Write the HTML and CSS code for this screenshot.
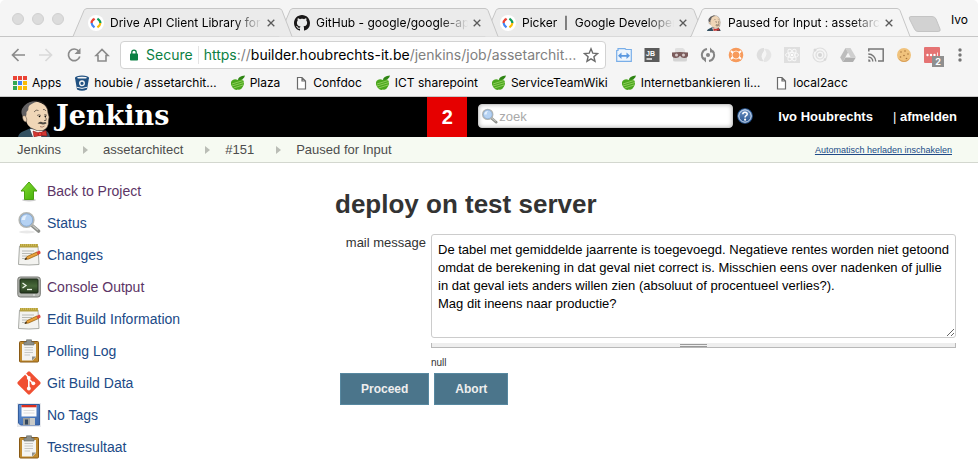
FILE: index.html
```html
<!DOCTYPE html>
<html lang="nl">
<head>
<meta charset="utf-8">
<title>Paused for Input : assetarchitect</title>
<link rel="stylesheet" href="styles.css">
</head>
<body>
<svg class="sprite" aria-hidden="true">
  <defs>
    <linearGradient id="g-green" x1="0" y1="0" x2="1" y2="1"><stop offset="0" stop-color="#8ae234"/><stop offset="1" stop-color="#3faa06"/></linearGradient>
    <linearGradient id="g-screen" x1="0" y1="0" x2="0" y2="1"><stop offset="0" stop-color="#2b4422"/><stop offset=".5" stop-color="#48683a"/><stop offset="1" stop-color="#24371d"/></linearGradient>
    <linearGradient id="g-help" x1="0" y1="0" x2="0" y2="1"><stop offset="0" stop-color="#7397c8"/><stop offset="1" stop-color="#26538f"/></linearGradient>
    <linearGradient id="g-disk" x1="0" y1="0" x2="1" y2="1"><stop offset="0" stop-color="#5d8fd3"/><stop offset="1" stop-color="#3a67ad"/></linearGradient>
  </defs>
  <symbol id="tab" viewBox="0 0 221 29" preserveAspectRatio="none">
    <path d="M0 28.5H1L12 2.500Q13 .5 15 .5H207Q209 .5 210 2.500L220 28.500"/>
  </symbol>
  <symbol id="developers" viewBox="0 0 16 16">
    <circle cx="8" cy="8" r="8" fill="#fff"/>
    <g fill="none" stroke-width="2.200">
      <path d="M6.600 3.600L4.800 5.200" stroke="#ea4335"/><path d="M5.400 4.400Q3.600 6 3.600 8" stroke="#ea4335"/>
      <path d="M3.600 8Q3.800 10.300 6.500 12.400" stroke="#4285f4"/>
      <path d="M9.400 3.600Q12.400 5.600 12.400 8" stroke="#0f9d58"/>
      <path d="M12.400 8Q12.300 10.300 9.400 12.400" stroke="#fbbc05"/>
    </g>
  </symbol>
  <symbol id="github" viewBox="0 0 16 16">
    <path fill="#191717" d="M8 0C3.580 0 0 3.580 0 8c0 3.540 2.290 6.530 5.470 7.590.4.070.55-.17.55-.38 0-.19-.01-.82-.01-1.490-2.010.37-2.530-.49-2.690-.94-.09-.23-.48-.94-.82-1.130-.28-.15-.68-.52-.01-.53.63-.01 1.080.58 1.230.82.72 1.210 1.870.87 2.330.66.070-.52.28-.87.51-1.070-1.780-.2-3.640-.89-3.640-3.950 0-.87.31-1.590.82-2.150-.08-.2-.36-1.020.08-2.120 0 0 .67-.21 2.200.82.64-.18 1.320-.27 2-.27s1.360.09 2 .27c1.530-1.040 2.200-.82 2.200-.82.44 1.100.16 1.920.08 2.120.51.56.82 1.270.82 2.150 0 3.070-1.870 3.750-3.650 3.950.29.25.54.73.54 1.480 0 1.070-.01 1.930-.01 2.200 0 .21.15.46.55.38A8.010 8.010 0 0 0 16 8c0-4.420-3.580-8-8-8z"/>
  </symbol>
  <symbol id="butler" viewBox="0 0 33 37">
    <path d="M0 37Q1 32.500 6 31L13 28 26 30Q31 31 32 37Z" fill="#335061"/>
    <path d="M12 29L25 30 23 37H15Z" fill="#fff"/>
    <path d="M5 17Q4 8 9 4 16 0 23 3 30 6 30 13 32 17 30.500 21 31 28 25 30.500 19 32 13 28 9 25 8 21 5 20 5 17Z" fill="#f0d6b7"/>
    <path d="M5 17Q2.500 13 4 9 7 3 15 1.300L20 1.500Q12 3.500 10.500 7 11 10 8.500 12 8.500 15 8 16Z" fill="#626062"/>
    <path d="M15 1.300Q24 0 28 6 30 9 30 13 32 17 30.500 21 31 28 25 30.500 19 32 13 28" fill="none" stroke="#3a3230" stroke-width=".6"/>
    <path d="M4.500 17Q5 14.500 7.500 16 9.500 19 8.500 22 5 22 4.500 17Z" fill="#f0d6b7" stroke="#4a403a" stroke-width=".5"/>
    <path d="M16 12Q18 9 20.500 10.500M25 9.500Q27 9 28 11M19 15.500Q21 14 23 15.500M26 15Q28 14 29 15.500M26.500 16Q29 19 28 20.500H26" fill="none" stroke="#4a403a" stroke-width=".7"/>
    <path d="M19.500 23.500Q22 20.500 25 22.500 28.500 21 28.500 23.500 25 25 23 24Z" fill="#504a42"/>
    <path d="M22 26.500Q24 28 26.500 26" fill="none" stroke="#8b5a4a" stroke-width=".7"/>
    <circle cx="21.500" cy="16.500" r=".8"/><circle cx="27.500" cy="16.300" r=".7"/>
    <path d="M15 31L21 33 28 30.500 29 36 22 35.500 16 37Z" fill="#d33833" stroke="#81100f" stroke-width=".5"/>
    <circle cx="22" cy="34" r="1.900" fill="#ef3d3a" stroke="#81100f" stroke-width=".5"/>
  </symbol>
  <symbol id="apple" viewBox="0 0 16 16">
    <path d="M8 5Q11 3 13 5 15 8 13 11.500 11 15.500 8 14.500 5 16 2.500 12.500 0 9 1.500 6 4 3 8 5Z" fill="#4ba71e"/>
    <path d="M8 5Q8 1 15 .5 14 5 8 5Z" fill="#2f8514"/>
    <path d="M2 9L13 5.500M2 11L14 7.500M3.500 13L13 10" stroke="#a8dc72" stroke-width=".7"/>
  </symbol>
  <symbol id="page" viewBox="0 0 16 16">
    <path d="M4.500 2.500H9L12.500 6V14H4.500ZM9 2.500V6H12.500" fill="#fff" stroke="#6a6a6a" stroke-width="1.200"/>
  </symbol>
  <symbol id="notepad" viewBox="0 0 24 24">
    <path d="M2.500 3H21L22 21.500Q12 22.500 1.500 21.500Z" fill="#f3f3f0" stroke="#a9aba6"/>
    <path d="M3 1H21V4.500H3Z" fill="#b5a03e"/><path d="M4 2H20.500" stroke="#e6d36c" stroke-dasharray="1 1"/>
    <path d="M5 8H17M5 10.500H15M5 13H10M5 15.500H8" stroke="#b8bab5"/>
    <path d="M8 16.500L10 13.500 20 9 21.500 11.500 11.500 16Z" fill="#e8a13c" stroke="#8f5902" stroke-width=".7"/>
    <path d="M19.500 9L22.500 7.500Q24 9 23.500 10.500L21 12Z" fill="#dd4c3c"/><path d="M7.500 17L9 14.500 10 16Z" fill="#222"/>
  </symbol>
  <symbol id="clipboard" viewBox="0 0 24 24">
    <rect x="2.500" y="2.500" width="19" height="20.500" rx="1" fill="#c18b2f" stroke="#8a5a14"/>
    <path d="M5 5H19V18L15.500 21.500H5Z" fill="#f4f4f2"/><path d="M19 17.500H15V21.500Z" fill="#8f918d"/>
    <path d="M7.500 8.500H16M7.500 11H16M7.500 13.500H16M7.500 16H13" stroke="#c7c8c5"/>
    <path d="M7 3H9.500V.8H14.500V3H17V6H7Z" fill="#8d908b" stroke="#62645f" stroke-width=".6"/>
  </symbol>
  <symbol id="lens" viewBox="0 0 24 24">
    <path d="M15 14.500L21.500 20" stroke="#8a8c88" stroke-width="3.600" stroke-linecap="round"/>
    <path d="M15.500 14.500L21 19" stroke="#c4c6c2" stroke-width="1.500"/>
    <circle cx="9.500" cy="9" r="7.200" fill="#b5d2f3" stroke="#b4b6b2" stroke-width="1.800"/>
    <circle cx="9.500" cy="9" r="6.200" fill="none" stroke="#7fa4d2" stroke-width=".8"/>
    <path d="M4.500 9Q5 4.500 10 4.300 8 6 8 9Z" fill="#e4f0fd"/>
  </symbol>
</svg>

<header class="browser">
  <div class="tabstrip">
    <div class="lights"><i></i><i></i><i></i></div>
    <div class="tabs">
      <div class="tab tab-1"><svg class="tab-shape"><use href="#tab"/></svg><svg class="i16"><use href="#developers"/></svg><span class="tab-title">Drive API Client Library for Java</span><button class="close" aria-label="Close tab"><svg viewBox="0 0 8 8"><path d="M.7.7L7.300 7.300M7.300.7L.7 7.300"/></svg></button></div>
      <div class="tab tab-2"><svg class="tab-shape"><use href="#tab"/></svg><svg class="i16"><use href="#github"/></svg><span class="tab-title">GitHub - google/google-api-java</span><button class="close" aria-label="Close tab"><svg viewBox="0 0 8 8"><path d="M.7.7L7.300 7.300M7.300.7L.7 7.300"/></svg></button></div>
      <div class="tab tab-3"><svg class="tab-shape"><use href="#tab"/></svg><svg class="i16"><use href="#developers"/></svg><span class="tab-title">Picker &nbsp;|&nbsp; Google Developers</span><button class="close" aria-label="Close tab"><svg viewBox="0 0 8 8"><path d="M.7.7L7.300 7.300M7.300.7L.7 7.300"/></svg></button></div>
      <div class="tab active"><svg class="tab-shape"><use href="#tab"/></svg><svg class="i16"><use href="#butler"/></svg><span class="tab-title">Paused for Input : assetarchitect</span><button class="close" aria-label="Close tab"><svg viewBox="0 0 8 8"><path d="M.7.7L7.300 7.300M7.300.7L.7 7.300"/></svg></button></div>
    </div>
    <button class="new-tab" aria-label="New tab"><svg viewBox="0 0 34 16"><path d="M3 .5H24Q27 .5 28 3L32 13Q33 15.500 30 15.500H10Q7.500 15.500 6.500 13L1.500 3Q.5 .5 3 .5Z" fill="#d2d2d2" stroke="#c4c4c4"/></svg></button>
    <span class="profile">Ivo</span>
  </div>

  <div class="toolbar">
    <div class="nav">
      <button aria-label="Back"><svg viewBox="0 0 16 16"><path d="M15 8H3M8.500 2L2.500 8L8.500 14" fill="none" stroke="#8b8b8b" stroke-width="1.700"/></svg></button>
      <button aria-label="Forward"><svg viewBox="0 0 16 16"><path d="M1 8H13M7.500 2L13.500 8L7.500 14" fill="none" stroke="#d9d9d9" stroke-width="1.700"/></svg></button>
      <button aria-label="Reload"><svg viewBox="0 0 16 16"><path d="M12.800 4.200A5.800 5.800 0 1 0 13.800 9.500" fill="none" stroke="#8b8b8b" stroke-width="1.700"/><path d="M14.500 1V7H8.500Z" fill="#8b8b8b"/></svg></button>
      <button aria-label="Home"><svg viewBox="0 0 16 16"><path d="M2 8.500L8 2.500L14 8.500H12V14H4V8.500Z" fill="none" stroke="#8b8b8b" stroke-width="1.600"/></svg></button>
    </div>
    <div class="omnibox">
      <svg class="lock" viewBox="0 0 8 12"><rect y="4.500" width="8" height="7" rx=".8" fill="#0b8043"/><path d="M1.800 5V3.300a2.200 2.200 0 0 1 4.400 0V5" fill="none" stroke="#0b8043" stroke-width="1.300"/></svg>
      <span class="secure">Secure</span>
      <span class="url"><span class="scheme">https</span>://<span class="host">builder.houbrechts-it.be</span>/jenkins/job/assetarchit…</span>
      <button class="star" aria-label="Bookmark"><svg viewBox="0 0 16 16"><path d="M8 1.800L9.800 6.200L14.500 6.600L10.900 9.700L12 14.300L8 11.800L4 14.300L5.100 9.700L1.500 6.600L6.200 6.200Z" fill="none" stroke="#6b6b6b" stroke-width="1.400"/></svg></button>
    </div>
    <div class="extensions">
      <svg viewBox="0 0 16 16"><path d="M.7 3.500V14.300H15.300V2.500H10L9 1.700H2V3.500Z" fill="#eef5fd" stroke="#79aee8" stroke-width="1.200"/><path d="M2 8.800L5.500 5.500V8H10.500V5.500L14 8.800L10.500 12V9.700H5.500V12Z" fill="#5b98e0"/></svg>
      <svg viewBox="0 0 16 16"><rect x=".5" y="1" width="15" height="14" fill="#5b5b5b"/><text class="jb" x="2" y="8.500">JB</text><path d="M2.500 12H8" stroke="#fff" stroke-width="1.400"/></svg>
      <svg viewBox="0 0 16 16"><path d="M3 2Q3 1 5 1H11L13 3V6H3Z" fill="#e0e0e0"/><path d="M1 10H15V13Q15 14.500 13 14.500H3Q1 14.500 1 13Z" fill="#d4d4d4"/><path d="M0 5.500Q8 4.500 16 5.500V9Q15 11.500 12 11 9.500 11 8 9 6.500 11 4 11 1 11.500 0 9Z" fill="#7b5c5c"/><circle cx="4.500" cy="8" r="1.500" fill="#d9cccc"/><circle cx="11.500" cy="8" r="1.500" fill="#d9cccc"/></svg>
      <svg viewBox="0 0 16 16"><path d="M7 2A6 6 0 0 0 3.500 12M9 14A6 6 0 0 0 12.500 4" fill="none" stroke="#858585" stroke-width="2"/><path d="M1 10.500H6V15.500ZM15 5.500H10V.5Z" fill="#858585"/><circle cx="8" cy="8" r="2" fill="#858585"/></svg>
      <svg viewBox="0 0 16 16"><circle cx="8" cy="8" r="7.300" fill="#f79a5b"/><circle cx="8" cy="8" r="4" fill="none" stroke="#fde3d0" stroke-width="1"/><path d="M3 4L5 6M3 12L5 10M13 4L11 6M13 12L11 10" stroke="#fff" stroke-width="1.800"/><circle cx="8" cy="8" r="2.200" fill="#f79a5b"/></svg>
      <svg viewBox="0 0 16 16"><path d="M8 1A7 7 0 0 0 2 12Q4 15 8 14 3 10 8 4Z" fill="#dedede"/><path d="M8 15A7 7 0 0 0 14 4Q12 1 8 2 13 6 8 12Z" fill="#e5e5e5"/></svg>
      <svg viewBox="0 0 16 16"><rect width="16" height="16" fill="#dfdfdf"/><g fill="none" stroke="#f8f8f8"><ellipse cx="8" cy="8" rx="6.500" ry="2.500"/><ellipse cx="8" cy="8" rx="6.500" ry="2.500" transform="rotate(60 8 8)"/><ellipse cx="8" cy="8" rx="6.500" ry="2.500" transform="rotate(120 8 8)"/></g><circle cx="8" cy="8" r="1.300" fill="#fff"/></svg>
      <svg viewBox="0 0 16 16"><g fill="none" stroke="#dedede" stroke-width="1.200"><circle cx="8" cy="8" r="7"/><circle cx="8" cy="8" r="4"/></g><circle cx="8" cy="8" r="2" fill="#d5d5d5"/><circle cx="3" cy="3" r="1.500" fill="#d8d8d8"/><circle cx="13" cy="12.500" r="1.300" fill="#d8d8d8"/></svg>
      <svg viewBox="0 0 16 16"><path d="M5.500 1H10.500L15.800 10H10.500Z" fill="#cfcfcf"/><path d="M5.500 1L.2 10.500 2.800 15 8 5.500Z" fill="#bdbdbd"/><path d="M5.500 10.500H15.800L13 15H2.800Z" fill="#b0b0b0"/></svg>
      <svg viewBox="0 0 16 16"><path d="M.8 4.500V2H15.200V14H10" fill="none" stroke="#777" stroke-width="1.500"/><path d="M.3 7A7.500 7.500 0 0 1 7.800 14.500M.3 10A4.500 4.500 0 0 1 4.800 14.500" fill="none" stroke="#777" stroke-width="1.400"/><path d="M.3 12.300A2.300 2.300 0 0 1 2.600 14.700H.3Z" fill="#777"/></svg>
      <svg viewBox="0 0 16 16"><circle cx="8" cy="8" r="7" fill="#f0c27c"/><path d="M2 11Q8 17 14 11 12 15 8 15 4 15 2 11Z" fill="#d9a05a"/><g fill="#a8743c"><circle cx="5" cy="5" r=".8"/><circle cx="9" cy="4" r=".8"/><circle cx="12" cy="7" r=".8"/><circle cx="8" cy="8.500" r=".8"/><circle cx="4.500" cy="10" r=".8"/><circle cx="10.500" cy="11.500" r=".8"/></g></svg>
      <span class="badged"><svg viewBox="0 0 16 16"><rect width="16" height="16" rx="1" fill="#e57373"/><g fill="#fff"><circle cx="3.500" cy="8" r="1.200"/><circle cx="7" cy="8" r="1.200"/><circle cx="10.500" cy="8" r="1.200"/><path d="M13 5.500h.8v5H13z"/></g></svg><b class="badge">2</b></span>
      <svg viewBox="0 0 16 16"><g fill="#757575"><circle cx="8" cy="3" r="1.700"/><circle cx="8" cy="8" r="1.700"/><circle cx="8" cy="13" r="1.700"/></g></svg>
    </div>
  </div>

  <nav class="bookmarks" aria-label="Bookmarks">
    <a href="#"><svg class="i16" viewBox="0 0 16 16"><path d="M1 1h4v4H1zM6 1h4v4H6zM11 1h4v4h-4z" fill="#ea4335"/><path d="M1 6h4v4H1z" fill="#34a853"/><path d="M6 6h4v4H6z" fill="#4285f4"/><path d="M11 6h4v4h-4zM6 11h4v4H6zM11 11h4v4h-4z" fill="#fbbc05"/><path d="M1 11h4v4H1z" fill="#34a853"/><path d="M5.500 0V16M10.500 0V16M0 5.500H16M0 10.500H16" stroke="#f5f5f5"/></svg>Apps</a>
    <a href="#"><svg class="i16" viewBox="0 0 16 16"><path d="M1 3L3 14.500Q8 17 13 14.500L15 3Z" fill="#205081"/><ellipse cx="8" cy="2.800" rx="7" ry="2.300" fill="#205081"/><ellipse cx="8" cy="2.700" rx="4.800" ry=".9" fill="#f5f5f5"/><circle cx="8" cy="8.300" r="2.300" fill="#205081" stroke="#f5f5f5" stroke-width="1.300"/><path d="M3 12.300Q8 14.500 13 12.300" fill="none" stroke="#f5f5f5"/></svg>houbie / assetarchit…</a>
    <a href="#"><svg class="i16"><use href="#apple"/></svg>Plaza</a>
    <a href="#"><svg class="i16"><use href="#page"/></svg>Confdoc</a>
    <a href="#"><svg class="i16"><use href="#apple"/></svg>ICT sharepoint</a>
    <a href="#"><svg class="i16"><use href="#apple"/></svg>ServiceTeamWiki</a>
    <a href="#"><svg class="i16"><use href="#apple"/></svg>Internetbankieren li…</a>
    <a href="#"><svg class="i16"><use href="#page"/></svg>local2acc</a>
  </nav>
</header>

<div class="jenkins-header">
  <a class="logo" href="#"><svg class="butler"><use href="#butler"/></svg>Jenkins</a>
  <a class="alerts" href="#">2</a>
  <form class="search">
    <div class="search-box"><svg class="search-icon"><use href="#lens"/></svg><input type="text" placeholder="zoek" aria-label="zoek"></div>
    <a href="#" aria-label="Help"><svg class="i16 help" viewBox="0 0 16 16"><circle cx="8" cy="8" r="7.200" fill="url(#g-help)" stroke="#2c5b96" stroke-width="1.200"/><circle cx="8" cy="8" r="6.200" fill="none" stroke="#dbe6f5"/><path d="M5.800 6.300Q5.900 4.300 8 4.300 10.300 4.300 10.200 6.200 10.100 7.300 8.900 7.900 8.100 8.400 8.100 9.500" fill="none" stroke="#fff" stroke-width="1.600"/><circle cx="8.100" cy="11.700" r="1.100" fill="#fff"/></svg></a>
  </form>
  <div class="login"><a href="#">Ivo Houbrechts</a><span><span class="bar">|</span> <a href="#">afmelden</a></span></div>
</div>

<nav class="breadcrumbs" aria-label="Breadcrumbs">
  <ol>
    <li><a href="#">Jenkins</a></li>
    <li><a href="#">assetarchitect</a></li>
    <li><a href="#">#151</a></li>
    <li><a href="#">Paused for Input</a></li>
  </ol>
  <a class="refresh" href="#">Automatisch herladen inschakelen</a>
</nav>

<div class="page-body">
  <ul class="tasks">
    <li><a class="visited" href="#"><svg viewBox="0 0 24 24"><ellipse cx="12" cy="21" rx="7" ry="1.500" fill="#ccc"/><path d="M12 3L20 12H16.500V20.500H7.500V12H4Z" fill="url(#g-green)" stroke="#4aa010"/></svg>Back to Project</a></li>
    <li><a href="#"><svg viewBox="0 0 24 24"><ellipse cx="10" cy="21" rx="8" ry="1.500" fill="#e9e9e9"/><use href="#lens" width="24" height="24"/></svg>Status</a></li>
    <li><a href="#"><svg><use href="#notepad"/></svg>Changes</a></li>
    <li><a class="visited" href="#"><svg viewBox="0 0 24 24"><rect x=".8" y="2" width="22.500" height="20" rx="2.500" fill="#b4b6b1" stroke="#777974"/><rect x="3" y="4" width="18" height="14" rx="1" fill="url(#g-screen)" stroke="#1d2a18"/><path d="M5.500 8L9 10.500L5.500 13" fill="none" stroke="#eef5e8" stroke-width="1.300"/><path d="M10 14.500H15" stroke="#eef5e8" stroke-width="1.300"/><circle cx="17" cy="20" r=".7" fill="#fff"/></svg>Console Output</a></li>
    <li><a href="#"><svg><use href="#notepad"/></svg>Edit Build Information</a></li>
    <li><a href="#"><svg><use href="#clipboard"/></svg>Polling Log</a></li>
    <li><a href="#"><svg viewBox="0 0 24 24"><path d="M11 .7Q12 0 13 .7L23.300 11Q24 12 23.300 13L13 23.300Q12 24 11 23.300L.7 13Q0 12 .7 11Z" fill="#f05033"/><path d="M8.500 3L11.800 6.500V17.500M11.800 8L16 12.300" fill="none" stroke="#fff" stroke-width="1.600"/><circle cx="11.800" cy="7" r="1.900" fill="#fff"/><circle cx="11.800" cy="17.500" r="1.900" fill="#fff"/><circle cx="16.300" cy="12.300" r="1.900" fill="#fff"/></svg>Git Build Data</a></li>
    <li><a href="#"><svg viewBox="0 0 24 24"><path d="M0 0H24V24H0Z" fill="#e8eaee"/><path d="M1.500 1.500H22.500V22H3.500L1.500 20Z" fill="url(#g-disk)" stroke="#345d9d"/><path d="M4.500 2H19.500V13.500H4.500Z" fill="#fbfbfb"/><path d="M4.500 2H19.500V4.300H4.500Z" fill="#dc3020"/><path d="M6.500 7.500H17.500M6.500 10H17.500" stroke="#dcdcdc"/><path d="M6 15H18V22H6Z" fill="#9b9d99"/><path d="M8 16.500H11V21.500H8Z" fill="#31465f"/><path d="M13 15H18V22H13Z" fill="#c9cac7"/></svg>No Tags</a></li>
    <li><a href="#"><svg><use href="#clipboard"/></svg>Testresultaat</a></li>
  </ul>

  <main>
    <h1>deploy on test server</h1>
    <form>
      <div class="field">
        <label for="mail">mail message</label>
        <div class="control">
          <textarea id="mail">De tabel met gemiddelde jaarrente is toegevoegd. Negatieve rentes worden niet getoond omdat de berekening in dat geval niet correct is. Misschien eens over nadenken of jullie in dat geval iets anders willen zien (absoluut of procentueel verlies?).
Mag dit ineens naar productie?</textarea>
          <div class="grip"><span></span></div>
          <div class="description">null</div>
        </div>
      </div>
      <div class="buttons"><button type="button">Proceed</button><button type="button">Abort</button></div>
    </form>
  </main>
</div>
</body>
</html>
```

FILE: styles.css
```css
* { box-sizing: border-box; }
body {
  margin: 0;
  background: #fff;
  color: #333;
  font: 13px/18px "Liberation Sans", Helvetica, Arial, sans-serif;
}
a { color: inherit; text-decoration: none; }
button { font: inherit; border: 0; padding: 0; background: none; }
svg { display: block; flex: none; }
ul, ol { list-style: none; margin: 0; padding: 0; }
.sprite { position: absolute; width: 0; height: 0; }
.i16 { width: 16px; height: 16px; }

/* browser window */
.browser {
  background: #f5f5f5;
  border-bottom: 1px solid #c8c8c8;
  border-radius: 5px 5px 0 0;
  color: #000;
  font-family: Inter, Roboto, sans-serif;
  font-size: 12px;
}
.tabstrip {
  display: flex;
  align-items: flex-start;
  height: 37px;
  padding: 8px 10px 0 12px;
  box-shadow: inset 0 -1px #c6c6c6;
}
.lights { display: flex; gap: 8px; width: 60px; padding-top: 5px; flex: none; }
.lights i { width: 12px; height: 12px; border-radius: 50%; background: #dcdcdc; border: 1px solid #d0d0d0; }
.tabs { display: flex; flex: 0 1 839px; min-width: 0; }
.tab {
  position: relative;
  display: flex;
  align-items: center;
  flex: 1 1 221px;
  min-width: 0;
  height: 29px;
  padding: 0 18px 0 16px;
}
.tab + .tab { margin-left: -15px; }
.tab-1 { z-index: 3; }
.tab-2 { z-index: 2; }
.tab-3 { z-index: 1; }
.tab.active { z-index: 4; }
.tab-shape { position: absolute; inset: 0; width: 100%; height: 100%; fill: #ebebeb; stroke: #c6c6c6; z-index: -1; }
.active .tab-shape { fill: #f5f5f5; }
.tab-title {
  flex: 1;
  min-width: 0;
  margin-left: 6px;
  overflow: hidden;
  white-space: nowrap;
  -webkit-mask-image: linear-gradient(to left, transparent, #000 28px);
  mask-image: linear-gradient(to left, transparent, #000 28px);
}
.close { margin-left: 5px; }
.close svg { width: 8px; height: 8px; stroke: #5a5a5a; stroke-width: 1.3; }
.new-tab { margin-top: 8px; margin-left: -3px; }
.new-tab svg { width: 34px; height: 16px; }
.profile { margin-left: auto; padding-top: 3px; }

.toolbar { display: flex; align-items: center; height: 36px; padding: 0 10px; gap: 10px; }
.nav { display: flex; gap: 12px; }
.nav svg { width: 16px; height: 16px; }
.omnibox {
  display: flex;
  align-items: center;
  flex: 1;
  min-width: 0;
  height: 28px;
  padding: 0 6px 0 9px;
  border: 1px solid #d2d2d2;
  border-radius: 4px;
  background: #fff;
  font-size: 14px;
}
.lock { width: 8px; height: 12px; }
.secure { color: #0b8043; padding: 0 5px 0 8px; border-right: 1px solid #e4e4e4; }
.url { flex: 1; min-width: 0; padding-left: 5px; overflow: hidden; white-space: nowrap; color: #808080; }
.scheme { color: #0b8043; }
.host { color: #000; }
.star svg { width: 16px; height: 16px; }
.extensions { display: flex; gap: 12px; }
.extensions svg { width: 16px; height: 16px; }
.jb { font: bold 7px "Liberation Sans", sans-serif; fill: #fff; }
.badged { position: relative; }
.badge {
  position: absolute;
  left: 8px;
  top: 9px;
  width: 12px;
  background: #8f8f8f;
  color: #fff;
  font-size: 9px;
  line-height: 11px;
  text-align: center;
}

.bookmarks { display: flex; gap: 13px; height: 23px; padding: 1px 12px 0; white-space: nowrap; overflow: hidden; }
.bookmarks a { display: flex; gap: 4px; height: 18px; align-items: center; }

/* jenkins top bar */
.jenkins-header { display: flex; align-items: stretch; height: 40px; padding-right: 21px; background: #000; color: #fff; }
.logo {
  display: flex;
  flex: 1;
  gap: 5px;
  padding-left: 18px;
  font: bold 27px/38px "DejaVu Serif", Georgia, serif;
}
.butler { width: 33px; height: 37px; margin-top: 3px; }
.alerts { width: 40px; background: #e60000; font-size: 20px; font-weight: bold; line-height: 40px; text-align: center; }
.search { display: flex; align-items: center; gap: 4px; padding: 0 25px 2px 11px; }
.search-box { position: relative; width: 255px; }
.search-icon { position: absolute; left: 3px; top: 4px; width: 17px; height: 17px; }
.search input {
  display: block;
  width: 100%;
  height: 24px;
  padding: 0 4px 0 20px;
  border: 1px solid #ccc;
  border-radius: 4px;
  box-shadow: inset 0 0 4px #bbb;
  font: inherit;
}
.search input::placeholder { color: #a9a9a9; }
.login { display: flex; align-items: center; gap: 20px; font-weight: bold; }
.bar { font-weight: normal; }

.breadcrumbs {
  display: flex;
  align-items: center;
  justify-content: space-between;
  height: 26px;
  padding: 0 26px 0 17px;
  background: #f6faf2;
  border-bottom: 1px solid #d3d7cf;
  color: #4d4d4d;
}
.breadcrumbs ol { display: flex; }
.breadcrumbs li { display: flex; align-items: center; }
.breadcrumbs li + li::before {
  content: "";
  margin: 0 15px 0 22px;
  border: solid transparent;
  border-width: 4px 0 4px 5px;
  border-left-color: #babdb6;
}
.refresh { color: #204a87; font-size: 9px; text-decoration: underline; }

/* content */
.page-body { display: grid; grid-template-columns: 335px 1fr; padding: 16px 22px 0 0; }
.tasks { display: flex; flex-direction: column; gap: 8px; padding-left: 17px; font-size: 14px; }
.tasks a { display: flex; align-items: center; gap: 6px; height: 24px; color: #204a87; }
.tasks .visited { color: #5c3566; }
.tasks svg { width: 24px; height: 24px; }
h1 { margin: 9px 0 14px; font-size: 26px; line-height: 32px; }
.field { display: grid; grid-template-columns: 91px 1fr; gap: 5px; }
.field label { text-align: right; }
textarea {
  display: block;
  width: 100%;
  height: 104px;
  padding: 6px 3px 6px 6px;
  border: 1px solid #ccc;
  border-radius: 3px;
  background: #fff;
  color: #000;
  font: inherit;
  resize: both;
}
.grip { display: flex; justify-content: center; height: 5px; margin-top: 5px; background: #eee; border: solid #b8b8b8; border-width: 0 1px 1px; }
.grip span { width: 27px; height: 3px; margin-top: 1px; border: solid #999; border-width: 1px 0; }
.description { margin-top: 9px; font-size: 10px; line-height: 12px; }
.buttons { display: flex; gap: 5px; margin: 4px 0 0 5px; }
.buttons button {
  height: 32px;
  padding: 0 20px;
  border: 1px solid #5788a0;
  background: #4b758b;
  color: #eee;
  font-size: 12px;
  font-weight: bold;
}
```
